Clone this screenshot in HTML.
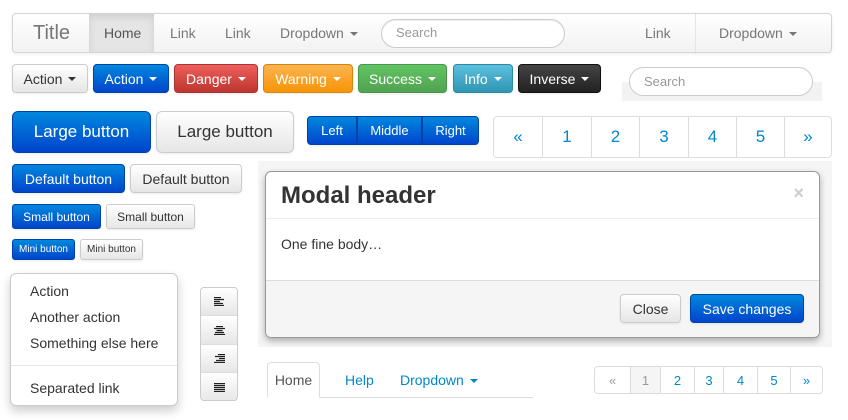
<!DOCTYPE html>
<html><head><meta charset="utf-8"><style>
*{box-sizing:border-box;margin:0;padding:0}
body{width:848px;height:420px;background:#fff;font-family:"Liberation Sans",sans-serif;position:relative;overflow:hidden;color:#333}
.a{position:absolute}
.btn{position:absolute;display:flex;align-items:center;justify-content:center;border-radius:4px;font-size:14px;border:1px solid #ccc;background:linear-gradient(#fff,#e6e6e6);color:#333;box-shadow:0 1px 2px rgba(0,0,0,.08)}
.pri{background:linear-gradient(#0088dd,#0044cc);border-color:#0044aa;color:#fff}
.dan{background:linear-gradient(#ee5f5b,#bd362f);border-color:#a33;color:#fff}
.war{background:linear-gradient(#fbb450,#f89406);border-color:#d8850a;color:#fff}
.suc{background:linear-gradient(#62c462,#51a351);border-color:#4a934a;color:#fff}
.inf{background:linear-gradient(#5bc0de,#2f96b4);border-color:#2d8aa5;color:#fff}
.inv{background:linear-gradient(#444,#222);border-color:#111;color:#fff}
.car{display:inline-block;width:0;height:0;border-left:4px solid transparent;border-right:4px solid transparent;border-top:4px solid currentColor;margin-left:6px;vertical-align:middle}
.nl{position:absolute;top:13px;height:40px;line-height:40px;color:#777;font-size:14px}
.pg{position:absolute;display:flex;border:1px solid #ddd;border-radius:4px;background:#fff}
.pg span{display:flex;align-items:center;justify-content:center;border-left:1px solid #ddd;color:#0088cc}
.pg span:first-child{border-left:none}
.dm{position:absolute;left:30px;font-size:14px;color:#333}
.ic{width:11px;height:9px;display:block}
</style></head><body>
<!-- navbar -->
<div class="a" style="left:12px;top:13px;width:820px;height:40px;border:1px solid #d4d4d4;border-radius:4px;background:linear-gradient(#fff,#f2f2f2);box-shadow:0 1px 4px rgba(0,0,0,.07)"></div>
<div class="nl" style="left:33px;font-size:20px;color:#777">Title</div>
<div class="a" style="left:89px;top:14px;width:65px;height:38px;background:#e5e5e5;box-shadow:inset 0 3px 8px rgba(0,0,0,.1)"></div>
<div class="nl" style="left:104px;color:#555">Home</div>
<div class="nl" style="left:170px">Link</div>
<div class="nl" style="left:225px">Link</div>
<div class="nl" style="left:280px">Dropdown<span class="car"></span></div>
<div class="a" style="left:381px;top:19px;width:184px;height:29px;border:1px solid #ccc;border-radius:15px;background:#fff;box-shadow:inset 0 1px 1px rgba(0,0,0,.075);font-size:13px;color:#999;padding:5px 14px">Search</div>
<div class="nl" style="left:645px">Link</div>
<div class="a" style="left:695px;top:14px;width:1px;height:38px;background:#e5e5e5"></div>
<div class="nl" style="left:719px">Dropdown<span class="car"></span></div>
<!-- row 2 -->
<div class="btn" style="left:12px;top:64px;width:76px;height:29px">Action<span class="car"></span></div>
<div class="btn pri" style="left:93px;top:64px;width:76px;height:29px">Action<span class="car"></span></div>
<div class="btn dan" style="left:174px;top:64px;width:84px;height:29px">Danger<span class="car"></span></div>
<div class="btn war" style="left:263px;top:64px;width:90px;height:29px">Warning<span class="car"></span></div>
<div class="btn suc" style="left:358px;top:64px;width:89px;height:29px">Success<span class="car"></span></div>
<div class="btn inf" style="left:453px;top:64px;width:60px;height:29px">Info<span class="car"></span></div>
<div class="btn inv" style="left:518px;top:64px;width:83px;height:29px">Inverse<span class="car"></span></div>
<div class="a" style="left:622px;top:82px;width:200px;height:19px;background:#f2f2f2"></div>
<div class="a" style="left:629px;top:67px;width:184px;height:29px;border:1px solid #ccc;border-radius:15px;background:#fff;font-size:13px;color:#999;padding:6px 14px">Search</div>
<!-- row 3 -->
<div class="btn pri" style="left:12px;top:111px;width:139px;height:42px;font-size:17px;border-radius:6px">Large button</div>
<div class="btn" style="left:156px;top:111px;width:138px;height:42px;font-size:17px;border-radius:6px">Large button</div>
<div class="btn pri" style="left:307px;top:116px;width:50px;height:29px;border-radius:4px 0 0 4px;font-size:13px">Left</div>
<div class="btn pri" style="left:357px;top:116px;width:65px;height:29px;border-radius:0;font-size:13px">Middle</div>
<div class="btn pri" style="left:422px;top:116px;width:57px;height:29px;border-radius:0 4px 4px 0;font-size:13px">Right</div>
<div class="pg" style="left:493px;top:116px;width:339px;height:42px;font-size:17px">
<span style="width:48px">«</span><span style="width:49px">1</span><span style="width:48px">2</span><span style="width:49px">3</span><span style="width:48px">4</span><span style="width:48px">5</span><span style="flex:1">»</span></div>
<!-- left buttons -->
<div class="btn pri" style="left:12px;top:164px;width:113px;height:29px">Default button</div>
<div class="btn" style="left:130px;top:164px;width:112px;height:29px">Default button</div>
<div class="btn pri" style="left:12px;top:204px;width:89px;height:25px;font-size:12px;border-radius:3px">Small button</div>
<div class="btn" style="left:106px;top:204px;width:89px;height:25px;font-size:12px;border-radius:3px">Small button</div>
<div class="btn pri" style="left:12px;top:239px;width:63px;height:21px;font-size:10px;border-radius:3px">Mini button</div>
<div class="btn" style="left:80px;top:239px;width:63px;height:21px;font-size:10px;border-radius:3px">Mini button</div>
<!-- dropdown menu -->
<div class="a" style="left:10px;top:273px;width:168px;height:133px;border:1px solid #ccc;border-radius:6px;background:#fff;box-shadow:0 5px 10px rgba(0,0,0,.2)"></div>
<div class="dm" style="top:283px">Action</div>
<div class="dm" style="top:309px">Another action</div>
<div class="dm" style="top:335px">Something else here</div>
<div class="a" style="left:11px;top:365px;width:166px;height:1px;background:#e5e5e5"></div>
<div class="dm" style="top:380px">Separated link</div>
<!-- vertical btn group -->
<div class="a" style="left:200px;top:287px;width:38px;height:114px;border:1px solid #ccc;border-radius:4px;overflow:hidden">
<div style="height:28px;background:linear-gradient(#fff,#e6e6e6);border-bottom:1px solid #ddd;display:flex;align-items:center;justify-content:center"><svg class="ic" viewBox="0 0 11 9"><path d="M0 .5h7M0 2.5h10M0 4.5h6M0 6.5h9M0 8.5h10" stroke="#222" stroke-width="1.2"/></svg></div>
<div style="height:29px;background:linear-gradient(#fff,#e6e6e6);border-bottom:1px solid #ddd;display:flex;align-items:center;justify-content:center"><svg class="ic" viewBox="0 0 11 9"><path d="M2 .5h7M0 2.5h11M2.5 4.5h6M1 6.5h9M0 8.5h11" stroke="#222" stroke-width="1.2"/></svg></div>
<div style="height:28px;background:linear-gradient(#fff,#e6e6e6);border-bottom:1px solid #ddd;display:flex;align-items:center;justify-content:center"><svg class="ic" viewBox="0 0 11 9"><path d="M4 .5h7M1 2.5h10M5 4.5h6M2 6.5h9M0 8.5h11" stroke="#222" stroke-width="1.2"/></svg></div>
<div style="height:29px;background:linear-gradient(#fff,#e6e6e6);display:flex;align-items:center;justify-content:center"><svg class="ic" viewBox="0 0 11 9"><path d="M0 .5h11M0 2.5h11M0 4.5h11M0 6.5h11M0 8.5h11" stroke="#222" stroke-width="1.2"/></svg></div>
</div>
<!-- modal -->
<div class="a" style="left:258px;top:161px;width:574px;height:186px;background:#f5f5f5"></div>
<div class="a" style="left:265px;top:171px;width:555px;height:167px;background:#fff;border:1px solid #999;border-radius:6px;box-shadow:0 3px 7px rgba(0,0,0,.3);overflow:hidden">
<div style="height:47px;border-bottom:1px solid #eee;padding:10px 15px;font-size:24px;font-weight:bold;color:#333;position:relative">Modal header<span style="position:absolute;right:15px;top:11px;font-size:18px;color:#ccc;font-weight:bold">×</span></div>
<div style="height:61px;padding:17px 15px;font-size:14px">One fine body…</div>
<div style="height:59px;background:#f5f5f5;border-top:1px solid #ddd"></div>
</div>
<div class="btn" style="left:620px;top:294px;width:61px;height:29px">Close</div>
<div class="btn pri" style="left:690px;top:294px;width:114px;height:29px">Save changes</div>
<!-- tabs -->
<div class="a" style="left:267px;top:397px;width:266px;height:1px;background:#ddd"></div>
<div class="a" style="left:267px;top:362px;width:53px;height:36px;border:1px solid #ddd;border-bottom-color:#fff;border-radius:4px 4px 0 0;background:#fff;font-size:14px;color:#555;line-height:34px;text-align:center">Home</div>
<div class="a" style="left:345px;top:372px;font-size:14px;color:#0088cc">Help</div>
<div class="a" style="left:400px;top:372px;font-size:14px;color:#0088cc">Dropdown<span class="car"></span></div>
<div class="pg" style="left:594px;top:366px;width:229px;height:28px;font-size:13px">
<span style="width:35px;color:#999">«</span><span style="width:30px;background:#f5f5f5;color:#999">1</span><span style="width:34px">2</span><span style="width:29px">3</span><span style="width:34px">4</span><span style="width:33px">5</span><span style="flex:1">»</span></div>
</body></html>
